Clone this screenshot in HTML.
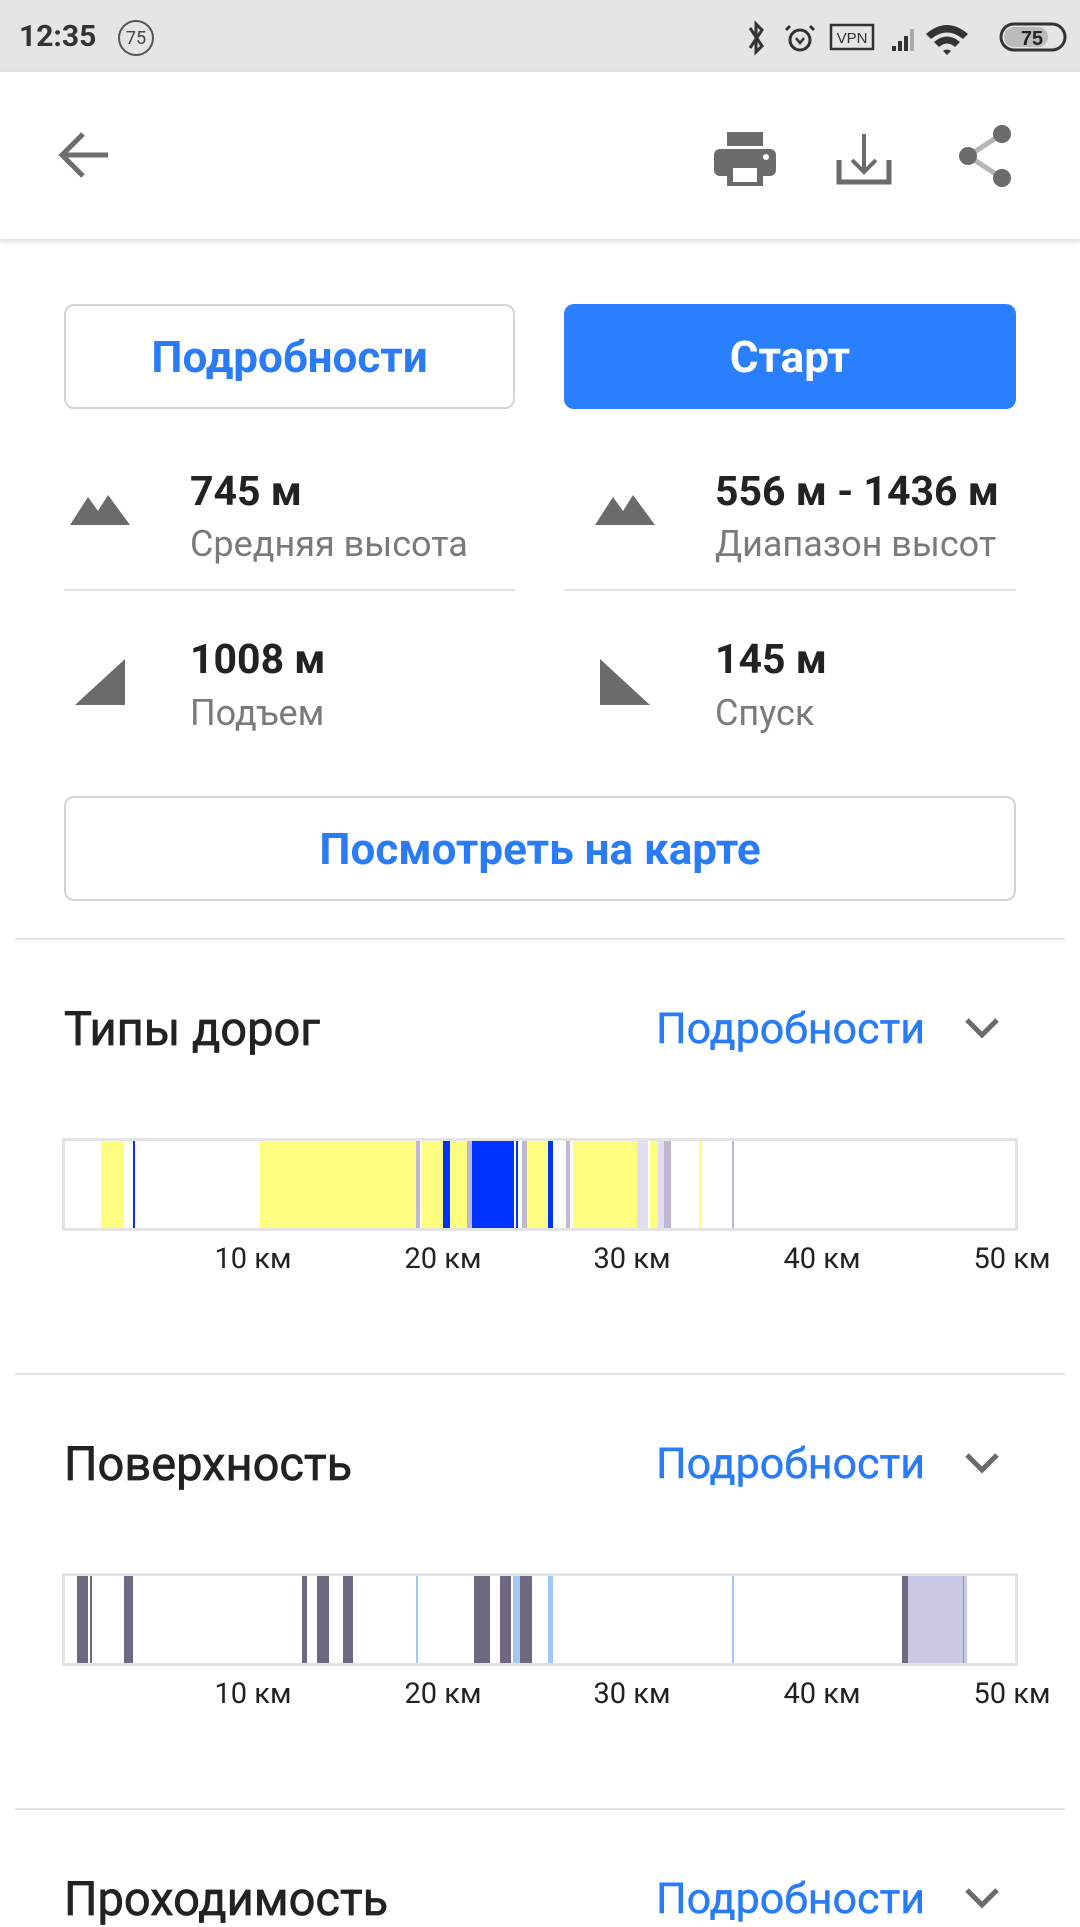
<!DOCTYPE html>
<html><head><meta charset="utf-8"><style>
*{margin:0;padding:0;box-sizing:border-box}
body{width:1080px;height:1920px;overflow:hidden;background:#fff;font-family:"Roboto","Liberation Sans","DejaVu Sans",sans-serif;position:relative}
.a{position:absolute}
.t{position:absolute;white-space:nowrap;line-height:1}
.btn{position:absolute;border-radius:10px;display:flex;align-items:center;justify-content:center;font-weight:bold;font-size:44px}
.ol{border:2px solid #d4d4d4;color:#2a7cf6;background:#fff}
.v{font-weight:bold;font-size:41px;color:#222}
.l{font-size:36px;color:#7a7a7a}
.hd{font-size:47px;color:#222;-webkit-text-stroke:0.7px #222}
.lk{font-size:43px;color:#2a7cf6;-webkit-text-stroke:0.5px #2a7cf6}
.km{font-size:29px;color:#222;transform:translateX(-50%)}
.bar{position:absolute;left:62px;width:956px;border:3px solid #e4e4e4;background:#fff;overflow:hidden}
.bar i{position:absolute;top:0;bottom:0}
</style></head><body>
<div class="a" style="left:0;top:0;width:1080px;height:72px;background:#e5e5e5"></div>
<div class="t" style="left:19px;top:22px;font-size:30px;font-weight:bold;color:#333">12:35</div>
<div class="a" style="left:118px;top:20px;width:36px;height:36px;border:2px solid #555;border-radius:50%;font-size:18px;color:#444;display:flex;align-items:center;justify-content:center">75</div>
<svg class="a" style="left:740px;top:18px" width="340" height="40" viewBox="0 0 340 40">
<path d="M10 10 L22 28 L16 34 L16 6 L22 12 L10 30" fill="none" stroke="#333" stroke-width="3"/>
<circle cx="60" cy="22" r="10" fill="none" stroke="#333" stroke-width="3"/><path d="M56 20 L60 25 L64 20" fill="none" stroke="#333" stroke-width="2.5"/><path d="M50 8 L46 12 M70 8 L74 12" stroke="#333" stroke-width="3"/>
<rect x="91" y="7" width="42" height="24" fill="none" stroke="#333" stroke-width="2.5"/><text x="112" y="25" font-size="15" text-anchor="middle" fill="#333" font-family="Liberation Sans">VPN</text>
<path d="M152 33 h4 v-5 h-4z M158 33 h4 v-10 h-4z M164 33 h4 v-15 h-4z" fill="#333"/><path d="M170 33 h4 v-22 h-4z" fill="#aaa"/>
<path d="M186 16 Q207 -2 228 16 L223 21 Q207 8 191 21Z M194 24 Q207 13 220 24 L215 29 Q207 22 199 29Z M203 33 L207 37 L211 33 Q207 30 203 33Z" fill="#333"/>
<rect x="261" y="6" width="64" height="26" rx="13" fill="none" stroke="#333" stroke-width="3"/><rect x="264" y="9" width="44" height="20" rx="10" fill="#bbb"/>
<text x="292" y="27" font-size="20" font-weight="bold" text-anchor="middle" fill="#222" font-family="Liberation Sans">75</text>
</svg>
<div class="a" style="left:0;top:72px;width:1080px;height:167px;background:#fff;box-shadow:0 3px 5px rgba(0,0,0,0.13)"></div>
<svg class="a" style="left:56px;top:130px" width="56" height="50" viewBox="0 0 56 50"><path d="M52 25 H8 M27 4 L6 25 L27 46" fill="none" stroke="#6e6e6e" stroke-width="5"/></svg>
<svg class="a" style="left:714px;top:132px" width="62" height="54" viewBox="0 0 62 54"><rect x="13" y="0" width="36" height="14" fill="#6b6b6b"/><rect x="0" y="17" width="62" height="27" rx="6" fill="#6b6b6b"/><rect x="13" y="30" width="36" height="24" fill="#6b6b6b"/><rect x="19" y="36" width="24" height="14" fill="#fff"/><circle cx="52" cy="25" r="3" fill="#fff"/></svg>
<svg class="a" style="left:836px;top:132px" width="56" height="54" viewBox="0 0 56 54"><path d="M28 2 V40 M16 28 L28 40 L40 28" fill="none" stroke="#6b6b6b" stroke-width="4"/><path d="M3 28 V50 H53 V28" fill="none" stroke="#6b6b6b" stroke-width="5"/></svg>
<svg class="a" style="left:954px;top:124px" width="62" height="64" viewBox="0 0 62 64"><path d="M14 32 L48 10 M14 32 L48 54" stroke="#b4b4b4" stroke-width="5"/><circle cx="48" cy="10" r="9" fill="#6b6b6b"/><circle cx="14" cy="32" r="9" fill="#6b6b6b"/><circle cx="48" cy="54" r="9" fill="#6b6b6b"/></svg>
<div class="btn ol" style="left:64px;top:304px;width:451px;height:105px">Подробности</div>
<div class="btn" style="left:564px;top:304px;width:452px;height:105px;background:#2a7fff;color:#fff">Старт</div>
<svg class="a" style="left:70px;top:493px" width="60" height="32" viewBox="0 0 60 32"><path d="M0 32 L18 4 L28 18 L38 2 L60 32Z" fill="#6b6b6b"/></svg>
<div class="t v" style="left:190px;top:472px">745 м</div>
<div class="t l" style="left:190px;top:526px">Средняя высота</div>
<svg class="a" style="left:595px;top:493px" width="60" height="32" viewBox="0 0 60 32"><path d="M0 32 L18 4 L28 18 L38 2 L60 32Z" fill="#6b6b6b"/></svg>
<div class="t v" style="left:715px;top:472px">556 м - 1436 м</div>
<div class="t l" style="left:715px;top:526px">Диапазон высот</div>
<div class="a" style="left:64px;top:589px;width:451px;height:2px;background:#e2e2e2"></div>
<div class="a" style="left:564px;top:589px;width:452px;height:2px;background:#e2e2e2"></div>
<svg class="a" style="left:75px;top:659px" width="50" height="46" viewBox="0 0 50 46"><path d="M0 46 L50 0 V46Z" fill="#6b6b6b"/></svg>
<div class="t v" style="left:190px;top:640px">1008 м</div>
<div class="t l" style="left:190px;top:695px">Подъем</div>
<svg class="a" style="left:600px;top:659px" width="50" height="46" viewBox="0 0 50 46"><path d="M0 0 L50 46 H0Z" fill="#6b6b6b"/></svg>
<div class="t v" style="left:715px;top:640px">145 м</div>
<div class="t l" style="left:715px;top:695px">Спуск</div>
<div class="btn ol" style="left:64px;top:796px;width:952px;height:105px">Посмотреть на карте</div>
<div class="a" style="left:15px;top:938px;width:1050px;height:2px;background:#e2e2e2"></div>
<div class="t hd" style="left:64px;top:1006px">Типы дорог</div>
<div class="t lk" style="left:656px;top:1008px">Подробности</div>
<svg class="a" style="left:964px;top:1016px" width="36" height="24" viewBox="0 0 36 24"><path d="M3 4 L18 19 L33 4" fill="none" stroke="#6b6b6b" stroke-width="5"/></svg>
<div class="bar" style="top:1138px;height:93px">
<i style="left:36px;width:23px;background:#fdfd80"></i>
<i style="left:68px;width:2px;background:#0033ff"></i>
<i style="left:195px;width:156px;background:#fdfd80"></i>
<i style="left:351px;width:4px;background:#c0b8d0"></i>
<i style="left:357px;width:21px;background:#fdfd80"></i>
<i style="left:378px;width:7px;background:#0033ff"></i>
<i style="left:385px;width:17px;background:#fdfd80"></i>
<i style="left:402px;width:5px;background:#c0b8d0"></i>
<i style="left:407px;width:42px;background:#0033ff"></i>
<i style="left:451px;width:2px;background:#0033ff"></i>
<i style="left:457px;width:5px;background:#c0b8d0"></i>
<i style="left:462px;width:21px;background:#fdfd80"></i>
<i style="left:483px;width:5px;background:#0033ff"></i>
<i style="left:501px;width:4px;background:#c0b8d0"></i>
<i style="left:508px;width:64px;background:#fdfd80"></i>
<i style="left:572px;width:11px;background:#e2def2"></i>
<i style="left:585px;width:8px;background:#fdfd80"></i>
<i style="left:593px;width:6px;background:#e2def2"></i>
<i style="left:599px;width:7px;background:#c0b8d0"></i>
<i style="left:634px;width:3px;background:#fdfd80"></i>
<i style="left:667px;width:2px;background:#c0b8d0"></i>
</div>
<div class="t km" style="left:253px;top:1245px">10 км</div>
<div class="t km" style="left:443px;top:1245px">20 км</div>
<div class="t km" style="left:632px;top:1245px">30 км</div>
<div class="t km" style="left:822px;top:1245px">40 км</div>
<div class="t km" style="left:1012px;top:1245px">50 км</div>
<div class="a" style="left:15px;top:1373px;width:1050px;height:2px;background:#e2e2e2"></div>
<div class="t hd" style="left:64px;top:1441px">Поверхность</div>
<div class="t lk" style="left:656px;top:1443px">Подробности</div>
<svg class="a" style="left:964px;top:1451px" width="36" height="24" viewBox="0 0 36 24"><path d="M3 4 L18 19 L33 4" fill="none" stroke="#6b6b6b" stroke-width="5"/></svg>
<div class="bar" style="top:1573px;height:93px">
<i style="left:12px;width:11px;background:#6e6880"></i>
<i style="left:25px;width:2px;background:#6e6880"></i>
<i style="left:59px;width:9px;background:#6e6880"></i>
<i style="left:237px;width:5px;background:#6e6880"></i>
<i style="left:252px;width:12px;background:#6e6880"></i>
<i style="left:278px;width:10px;background:#6e6880"></i>
<i style="left:351px;width:2px;background:#a0c8f8"></i>
<i style="left:409px;width:16px;background:#6e6880"></i>
<i style="left:435px;width:11px;background:#6e6880"></i>
<i style="left:448px;width:7px;background:#a0c8f8"></i>
<i style="left:455px;width:12px;background:#6e6880"></i>
<i style="left:483px;width:5px;background:#a0c8f8"></i>
<i style="left:667px;width:2px;background:#a0c8f8"></i>
<i style="left:837px;width:6px;background:#6e6880"></i>
<i style="left:843px;width:55px;background:#c9c9e5"></i>
<i style="left:898px;width:1px;background:#d08a20"></i>
<i style="left:899px;width:3px;background:#c9c9e5"></i>
</div>
<div class="t km" style="left:253px;top:1680px">10 км</div>
<div class="t km" style="left:443px;top:1680px">20 км</div>
<div class="t km" style="left:632px;top:1680px">30 км</div>
<div class="t km" style="left:822px;top:1680px">40 км</div>
<div class="t km" style="left:1012px;top:1680px">50 км</div>
<div class="a" style="left:15px;top:1808px;width:1050px;height:2px;background:#e2e2e2"></div>
<div class="t hd" style="left:64px;top:1876px">Проходимость</div>
<div class="t lk" style="left:656px;top:1878px">Подробности</div>
<svg class="a" style="left:964px;top:1886px" width="36" height="24" viewBox="0 0 36 24"><path d="M3 4 L18 19 L33 4" fill="none" stroke="#6b6b6b" stroke-width="5"/></svg>
</body></html>
